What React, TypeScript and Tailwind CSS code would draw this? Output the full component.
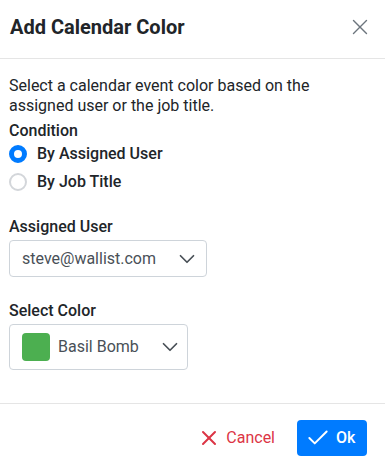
import { X, ChevronDown, Check } from "lucide-react";

export default function App() {
    return (
        <div className="h-[464px] w-[385px] bg-white text-[#212529] font-['Roboto',sans-serif]">
            <header className="flex h-[59px] items-center justify-between border-b border-[#e5e5e5] pb-[4px] pl-[10px] pr-[12px]">
                <h1 className="text-[20px] font-bold leading-none">Add Calendar Color</h1>
                <X className="h-[26px] w-[26px] text-[#6c757d]" strokeWidth={1.3} />
            </header>

            <section className="border-b border-[#e5e5e5] px-[9px] pb-[33px] pt-[17px]">
                <p className="text-[16px] leading-[20px]">
                    Select a calendar event color based on the assigned user or the job title.
                </p>

                <div className="mt-[5px] text-[16px] font-medium leading-[20px]">Condition</div>
                <div className="mt-[3px] flex flex-col gap-[8px]">
                    <label className="flex items-center gap-[10px]">
                        <span className="h-[18px] w-[18px] rounded-full border-[5px] border-[#007bff] bg-white" />
                        <span className="text-[16px] font-medium leading-[20px]">By Assigned User</span>
                    </label>
                    <label className="flex items-center gap-[10px]">
                        <span className="h-[18px] w-[18px] rounded-full border-2 border-[#d3d6da] bg-white" />
                        <span className="text-[16px] font-medium leading-[20px]">By Job Title</span>
                    </label>
                </div>

                <div className="mt-[25px] text-[16px] font-medium leading-[20px]">Assigned User</div>
                <div className="mt-[3px] flex h-[37px] w-[198px] items-center justify-between rounded-[4px] border border-[#ced4da] pl-[12px] pr-[6px]">
                    <span className="text-[16px] text-[#495057]">steve@wallist.com</span>
                    <ChevronDown className="h-[26px] w-[26px] text-[#495057]" strokeWidth={1.6} />
                </div>

                <div className="mt-[24px] text-[16px] font-medium leading-[20px]">Select Color</div>
                <div className="mt-[3px] flex h-[46px] w-[179px] items-center rounded-[4px] border border-[#ced4da] pl-[12px] pr-[4px]">
                    <span className="h-[28px] w-[28px] rounded-[4px] bg-[#4caf50]" />
                    <span className="ml-[8px] flex-1 text-[16px] text-[#495057]">Basil Bomb</span>
                    <ChevronDown className="h-[26px] w-[26px] text-[#495057]" strokeWidth={1.6} />
                </div>
            </section>

            <footer className="flex items-center justify-end gap-[22px] pr-[18px] pt-[16px]">
                <button type="button" className="flex items-center gap-[5px] text-[16px] text-[#dc3545]">
                    <X className="h-[24px] w-[24px]" strokeWidth={2} />
                    Cancel
                </button>
                <button
                    type="button"
                    className="flex h-[36px] w-[70px] items-center gap-[5px] rounded-[4px] bg-[#007bff] pl-[8px] text-[16px] font-medium text-white"
                >
                    <Check className="h-[26px] w-[26px]" strokeWidth={1.8} />
                    Ok
                </button>
            </footer>
        </div>
    );
}
